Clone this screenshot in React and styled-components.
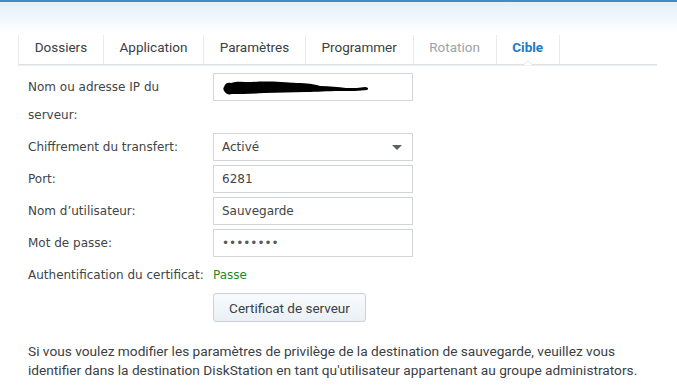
import React from "react";
import styled, { createGlobalStyle } from "styled-components";

const GlobalStyle = createGlobalStyle`
  html, body {
    margin: 0;
    padding: 0;
    background: #ffffff;
  }
`;

const Page = styled.div`
  width: 677px;
  height: 386px;
  overflow: hidden;
  box-sizing: border-box;
  border-top: 2px solid #3b8fc9;
  background: linear-gradient(to bottom, #e3f0fa 0px, #f6fafd 22px, #ffffff 32px);
  padding: 30px 20px 0 18px;
`;

const TabBar = styled.div`
  display: flex;
  height: 32px;
  border-bottom: 1px solid #dde1e5;
  box-shadow: 0 1px 0 #eef0f2;
`;

const Tab = styled.div`
  position: relative;
  display: flex;
  align-items: center;
  padding: 0 15.7px 6px;
  margin-top: 3px;
  border-left: 1px solid #e9ebed;
  font-family: "Roboto", "Liberation Sans", sans-serif;
  font-size: 13.5px;
  font-weight: ${(p) => (p.$active ? 700 : 400)};
  color: ${(p) => (p.$active ? "#1f7ac4" : p.$disabled ? "#9da3a8" : "#3b4044")};
  &:last-child {
    border-right: 1px solid #e9ebed;
  }
  ${(p) =>
    p.$active &&
    `
    &::after {
      content: "";
      position: absolute;
      left: 50%;
      bottom: -1px;
      margin-left: -5px;
      border-left: 5px solid transparent;
      border-right: 5px solid transparent;
      border-bottom: 5px solid #dde1e5;
    }
    &::before {
      content: "";
      position: absolute;
      left: 50%;
      bottom: -1px;
      margin-left: -4px;
      border-left: 4px solid transparent;
      border-right: 4px solid transparent;
      border-bottom: 4px solid #ffffff;
      z-index: 1;
    }
  `}
`;

const Form = styled.div`
  display: grid;
  grid-template-columns: 185px 200px;
  row-gap: 4px;
  padding: 8px 0 0 10px;
`;

const Label = styled.div`
  font-family: "DejaVu Sans", Verdana, sans-serif;
  font-size: 12px;
  line-height: 28px;
  color: #404548;
`;

const Field = styled.div`
  box-sizing: border-box;
  height: 28px;
  border: 1px solid #d3d6d9;
  background: #ffffff;
  display: flex;
  align-items: center;
  justify-content: space-between;
  padding: 0 8px;
  font-family: "DejaVu Sans", Verdana, sans-serif;
  font-size: 12px;
  color: #404548;
`;

const Dots = styled.span`
  font-size: 12px;
  color: #555a5e;
`;

const Caret = styled.span`
  width: 0;
  height: 0;
  border-left: 5px solid transparent;
  border-right: 5px solid transparent;
  border-top: 5px solid #5a5f63;
  margin-right: 2px;
`;

const Scribble = styled.svg`
  display: block;
  margin-top: 1px;
`;

const Status = styled.div`
  font-family: "DejaVu Sans", Verdana, sans-serif;
  font-size: 12px;
  line-height: 28px;
  color: #1f8a1f;
`;

const ButtonCell = styled.div`
  grid-column: 2;
`;

const Button = styled.button`
  box-sizing: border-box;
  width: 153px;
  height: 29px;
  border: 1px solid #c9d0d6;
  border-radius: 3px;
  background: linear-gradient(to bottom, #f8fbfd, #eaf0f5);
  font-family: "Roboto", "Liberation Sans", sans-serif;
  font-size: 13.5px;
  color: #3b4044;
  padding: 0;
`;

const Note = styled.p`
  width: 630px;
  margin: 20px 0 0 10px;
  font-family: "Roboto", "Liberation Sans", sans-serif;
  font-size: 13.7px;
  line-height: 19px;
  color: #3b4044;
`;

const tabs = [
  { name: "Dossiers" },
  { name: "Application" },
  { name: "Paramètres" },
  { name: "Programmer" },
  { name: "Rotation", disabled: true },
  { name: "Cible", active: true },
];

export default function App() {
  return (
    <Page>
      <GlobalStyle />
      <TabBar>
        {tabs.map((t) => (
          <Tab key={t.name} $active={t.active} $disabled={t.disabled}>
            {t.name}
          </Tab>
        ))}
      </TabBar>
      <Form>
        <Label>
          Nom ou adresse IP du
          <br />
          serveur:
        </Label>
        <Field>
          <Scribble width="150" height="16" viewBox="0 0 150 16">
            <path
              d="M2 7 C3 3 6 2 9 3 C14 1 22 2 30 2 C45 1 60 2 75 3 C85 3 92 4 98 6 C108 6 116 7 124 8 C132 8 138 8 143 7 C146 7 147 9 145 10 C138 11 128 11 118 11 C105 11 95 12 84 12 C70 12 56 13 42 13 C30 14 18 14 10 14 C7 15 4 14 3 12 C1 10 1 8 2 7 Z"
              fill="#000"
            />
          </Scribble>
        </Field>
        <Label>Chiffrement du transfert:</Label>
        <Field>
          Activé
          <Caret />
        </Field>
        <Label>Port:</Label>
        <Field>6281</Field>
        <Label>Nom d’utilisateur:</Label>
        <Field>Sauvegarde</Field>
        <Label>Mot de passe:</Label>
        <Field>
          <Dots>••••••••</Dots>
        </Field>
        <Label>Authentification du certificat:</Label>
        <Status>Passe</Status>
        <ButtonCell>
          <Button>Certificat de serveur</Button>
        </ButtonCell>
      </Form>
      <Note>
        Si vous voulez modifier les paramètres de privilège de la destination de sauvegarde, veuillez vous
        identifier dans la destination DiskStation en tant qu'utilisateur appartenant au groupe administrators.
      </Note>
    </Page>
  );
}
